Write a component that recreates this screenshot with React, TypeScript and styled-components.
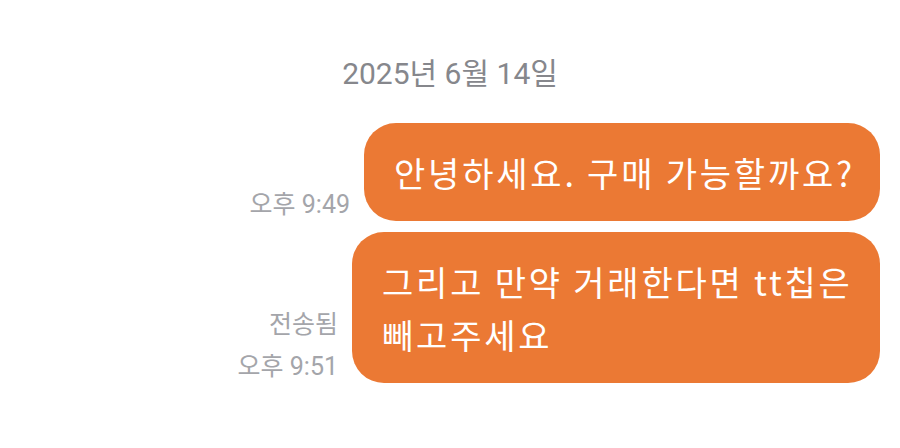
import styled, { createGlobalStyle } from "styled-components";

const GlobalStyle = createGlobalStyle`
  html, body {
    margin: 0;
    padding: 0;
    background: #ffffff;
  }
  body {
    font-family: Roboto, "Noto Sans CJK KR", sans-serif;
  }
`;

interface IMessage {
  text: string;
  time: string;
  sent?: boolean;
}

const messages: IMessage[] = [
  { text: "안녕하세요. 구매 가능할까요?", time: "오후 9:49" },
  { text: "그리고 만약 거래한다면 tt칩은 빼고주세요", time: "오후 9:51", sent: true },
];

export default function App(): JSX.Element {
  return (
    <>
      <GlobalStyle />
      <Page>
        <DateLabel>2025년 6월 14일</DateLabel>
        <MessageList>
          {messages.map((msg) => (
            <Row key={msg.time}>
              <Meta>
                {msg.sent ? <MetaLine>전송됨</MetaLine> : null}
                <MetaLine>{msg.time}</MetaLine>
              </Meta>
              <Bubble>{msg.text}</Bubble>
            </Row>
          ))}
        </MessageList>
      </Page>
    </>
  );
}

const Page = styled.div`
  width: 900px;
  height: 448px;
  box-sizing: border-box;
  padding: 54px 20px 0 0;
  display: flex;
  flex-direction: column;
  overflow: hidden;
`;

const DateLabel = styled.div`
  align-self: center;
  padding-left: 20px;
  font-family: Roboto, "Noto Sans CJK KR", sans-serif;
  font-size: 30px;
  line-height: 40px;
  color: #86878c;
  margin-bottom: 29px;
`;

const MessageList = styled.div`
  display: flex;
  flex-direction: column;
  align-items: flex-end;
  gap: 11px;
`;

const Row = styled.div`
  display: flex;
  align-items: flex-end;
  justify-content: flex-end;
  gap: 14px;
`;

const Meta = styled.div`
  display: flex;
  flex-direction: column;
  align-items: flex-end;
  gap: 12px;
  padding-bottom: 1px;
`;

const MetaLine = styled.span`
  font-family: Roboto, "Noto Sans CJK KR", sans-serif;
  font-size: 25px;
  line-height: 30px;
  color: #a4a5aa;
  white-space: nowrap;
`;

const Bubble = styled.div`
  max-width: 528px;
  box-sizing: border-box;
  padding: 23px 25px 22px 30px;
  border-radius: 32px;
  background: #eb7934;
  color: #ffffff;
  font-family: "Noto Sans CJK KR", sans-serif;
  font-size: 34px;
  line-height: 53px;
  letter-spacing: 2.8px;
  word-break: keep-all;
`;
